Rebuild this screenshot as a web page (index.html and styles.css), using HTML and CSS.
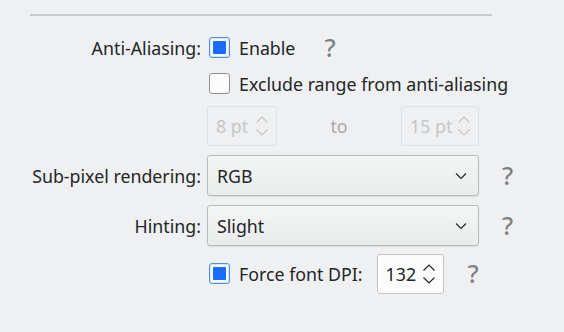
FILE: index.html
```html
<!DOCTYPE html>
<html>
<head>
<meta charset="UTF-8">
<title>Font settings</title>
<link rel="stylesheet" href="styles.css">
</head>
<body>

<div class="page">
	<div class="sep"></div>

	<div class="form">
		<div class="label">Anti-Aliasing:</div>
		<div class="field">
			<span class="check on"></span>
			<span class="text">Enable</span>
			<span class="help h1">?</span>
		</div>

		<div class="label"></div>
		<div class="field">
			<span class="check"></span>
			<span class="text">Exclude range from anti-aliasing</span>
		</div>

		<div class="label"></div>
		<div class="field">
			<div class="spin off s1">
				<span class="val">8 pt</span>
				<svg class="arrows" width="14" height="22" viewBox="0 0 14 22"><path d="M1.5 7.5 L7 2 L12.5 7.5 M1.5 14.5 L7 20 L12.5 14.5" fill="none" stroke="#c4c5c6" stroke-width="1.2"/></svg>
			</div>
			<span class="to">to</span>
			<div class="spin off s2">
				<span class="val">15 pt</span>
				<svg class="arrows" width="14" height="22" viewBox="0 0 14 22"><path d="M1.5 7.5 L7 2 L12.5 7.5 M1.5 14.5 L7 20 L12.5 14.5" fill="none" stroke="#c4c5c6" stroke-width="1.2"/></svg>
			</div>
		</div>

		<div class="label">Sub-pixel rendering:</div>
		<div class="field">
			<div class="combo">
				<span class="val">RGB</span>
				<svg class="chev" width="12" height="8" viewBox="0 0 12 8"><path d="M1 1.5 L6 6.5 L11 1.5" fill="none" stroke="#232627" stroke-width="1.2"/></svg>
			</div>
			<span class="help h2">?</span>
		</div>

		<div class="label">Hinting:</div>
		<div class="field">
			<div class="combo">
				<span class="val">Slight</span>
				<svg class="chev" width="12" height="8" viewBox="0 0 12 8"><path d="M1 1.5 L6 6.5 L11 1.5" fill="none" stroke="#232627" stroke-width="1.2"/></svg>
			</div>
			<span class="help h2">?</span>
		</div>

		<div class="label"></div>
		<div class="field">
			<span class="check on"></span>
			<span class="text">Force font DPI:</span>
			<div class="spin dpi">
				<span class="val">132</span>
				<svg class="arrows" width="14" height="22" viewBox="0 0 14 22"><path d="M1.5 7.5 L7 2 L12.5 7.5 M1.5 14.5 L7 20 L12.5 14.5" fill="none" stroke="#232627" stroke-width="1.2"/></svg>
			</div>
			<span class="help h3">?</span>
		</div>
	</div>
</div>

</body>
</html>
```

FILE: styles.css
```css
body {
	margin: 0;
	background: #eff0f1;
	font-family: "Noto Sans", "DejaVu Sans", sans-serif;
	font-size: 17.8px;
	color: #232627;
}

.page {
	width: 564px;
	height: 332px;
	padding-top: 14px;
	box-sizing: border-box;
}

.sep {
	margin-left: 30px;
	width: 462px;
	height: 2px;
	background: #cacbcc;
}

.form {
	margin-top: 13px;
	display: grid;
	grid-template-columns: 201px 1fr;
	grid-template-rows: 37px 35px 50px 49px 51px 45px;
	column-gap: 6px;
}

.label {
	display: flex;
	align-items: center;
	justify-content: flex-end;
	white-space: nowrap;
}

.field {
	display: flex;
	align-items: center;
	white-space: nowrap;
}

.check {
	width: 21px;
	height: 21px;
	box-sizing: border-box;
	margin-left: 2px;
	border: 1px solid #8e9092;
	border-radius: 3px;
	background: #fcfcfc;
	display: flex;
	align-items: center;
	justify-content: center;
}

.check.on {
	border-color: #4d8ff5;
	box-shadow: inset 0 0 0 1px #d6e5fd;
}

.check.on::after {
	content: "";
	width: 13px;
	height: 13px;
	background: #1a6cff;
	border-radius: 1px;
}

.text {
	margin-left: 9px;
}

.help {
	color: #808183;
	font-size: 25px;
	font-weight: 500;
	line-height: 1;
}

.h1 { margin-left: 29px; }
.h2 { margin-left: 23px; }
.h3 { margin-left: 24px; }

.spin {
	height: 40px;
	box-sizing: border-box;
	border: 1px solid #c2c3c4;
	border-radius: 3px;
	display: flex;
	align-items: center;
	padding-left: 8px;
	padding-right: 7px;
	justify-content: space-between;
}

.spin.off {
	border-color: #dfe0e1;
	color: #c5c6c7;
}

.s1 { width: 70px; }
.s2 { width: 78px; }

.to {
	width: 124px;
	text-align: center;
	color: #a7a8a9;
}

.dpi {
	width: 67px;
	margin-left: 14px;
	background: #fcfcfc;
}

.combo {
	width: 272px;
	height: 41px;
	box-sizing: border-box;
	border: 1px solid #b9babb;
	border-radius: 3px;
	background: linear-gradient(#f4f5f5, #eaebec);
	box-shadow: 0 1px 1px rgba(0, 0, 0, 0.08);
	display: flex;
	align-items: center;
	justify-content: space-between;
	padding-left: 9px;
	padding-right: 11px;
}
```
